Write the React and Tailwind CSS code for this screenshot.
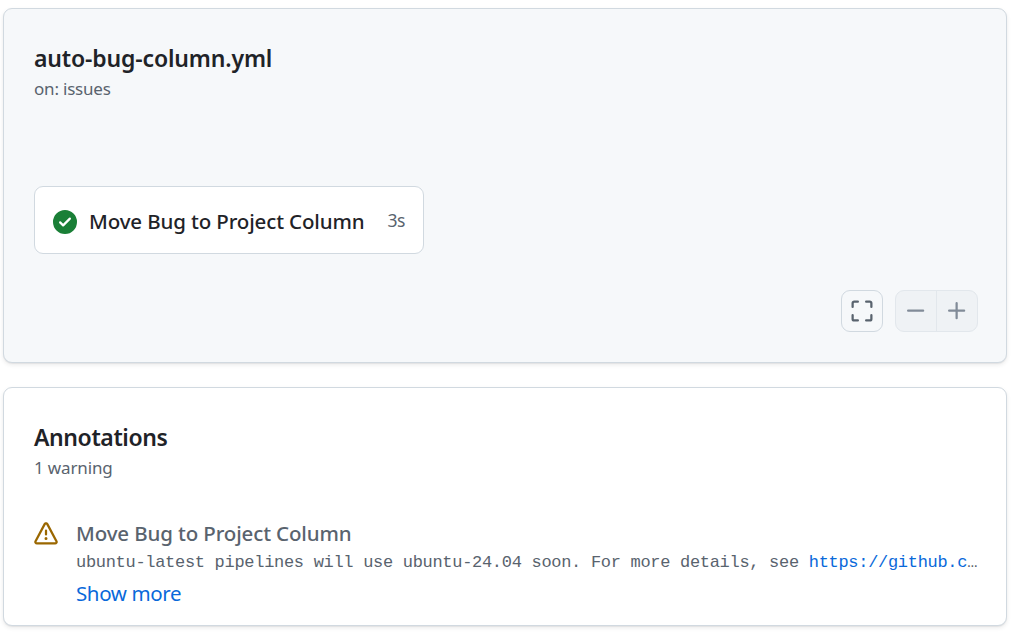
import React from "react";

function Icon({ className, size = 24, children }) {
  return (
    <svg viewBox="0 0 16 16" width={size} height={size} fill="currentColor" className={"shrink-0 " + className}>
      {children}
    </svg>
  );
}

function Card({ className, children }) {
  return (
    <section className={"rounded-[9px] border border-[#d1d9e0] shadow-[0_1px_1px_#1f232810,0_2px_4px_#1f232816] " + className}>
      {children}
    </section>
  );
}

export default function App() {
  return (
    <main className="flex h-[632px] w-[1013px] flex-col gap-6 overflow-hidden bg-white pt-2 pr-1.5 pl-[3px] font-['Noto_Sans','Open_Sans',sans-serif] text-[#1f2328]">
      <Card className="flex h-[355px] flex-col bg-[#f6f8fa] pt-[33px] pr-7 pl-[30px]">
        <h2 className="h-8 text-[23px] leading-8 font-semibold tracking-[-0.15px] whitespace-nowrap">auto-bug-column.yml</h2>
        <p className="h-7 pt-px text-[17px] leading-7 tracking-[-0.2px] whitespace-nowrap text-[#59636e]">on: issues</p>
        <div className="mt-[84px] flex h-[68px] w-[390px] items-center rounded-[9px] border border-[#d1d9e0] bg-white pt-1 pr-[18px] pl-[18px]">
          <Icon className="text-[#1a7f37]">
            <path d="M8 16A8 8 0 1 1 8 0a8 8 0 0 1 0 16Zm3.78-9.72a.751.751 0 0 0-.018-1.042.751.751 0 0 0-1.042-.018L6.75 9.19 5.28 7.72a.751.751 0 0 0-1.042.018.751.751 0 0 0-.018 1.042l2 2a.75.75 0 0 0 1.06 0Z" />
          </Icon>
          <span className="ml-3 pb-0.5 text-[20.5px] leading-7 font-medium tracking-[-0.13px] whitespace-nowrap">Move Bug to Project Column</span>
          <span className="ml-auto pb-1 text-[17.5px] leading-7 tracking-[-0.4px] text-[#59636e]">3s</span>
        </div>
        <div className="mt-9 flex justify-end gap-3">
          <button className="flex size-[42px] items-center justify-center rounded-[9px] border border-[#d1d9e0] bg-[#f6f8fa] text-[#59636e]">
            <Icon className="">
              <path d="M1.75 10a.75.75 0 0 1 .75.75v2.5c0 .138.112.25.25.25h2.5a.75.75 0 0 1 0 1.5h-2.5A1.75 1.75 0 0 1 1 13.25v-2.5a.75.75 0 0 1 .75-.75Zm12.5 0a.75.75 0 0 1 .75.75v2.5A1.75 1.75 0 0 1 13.25 15h-2.5a.75.75 0 0 1 0-1.5h2.5a.25.25 0 0 0 .25-.25v-2.5a.75.75 0 0 1 .75-.75ZM2.75 2.5a.25.25 0 0 0-.25.25v2.5a.75.75 0 0 1-1.5 0v-2.5C1 1.784 1.784 1 2.75 1h2.5a.75.75 0 0 1 0 1.5ZM10 1.75a.75.75 0 0 1 .75-.75h2.5c.966 0 1.75.784 1.75 1.75v2.5a.75.75 0 0 1-1.5 0v-2.5a.25.25 0 0 0-.25-.25h-2.5a.75.75 0 0 1-.75-.75Z" />
            </Icon>
          </button>
          <div className="flex h-[42px] w-[83px] rounded-[9px] border border-[#e2e7ec] bg-[#eff2f5] text-[#818b98]">
            <button className="flex w-[41px] items-center justify-center border-r border-[#e2e7ec]">
              <Icon className=""><path d="M2 7.75A.75.75 0 0 1 2.75 7h10a.75.75 0 0 1 0 1.5h-10A.75.75 0 0 1 2 7.75Z" /></Icon>
            </button>
            <button className="flex w-10 items-center justify-center">
              <Icon className=""><path d="M7.75 2a.75.75 0 0 1 .75.75V7h4.25a.75.75 0 0 1 0 1.5H8.5v4.25a.75.75 0 0 1-1.5 0V8.5H2.75a.75.75 0 0 1 0-1.5H7V2.75A.75.75 0 0 1 7.75 2Z" /></Icon>
            </button>
          </div>
        </div>
      </Card>

      <Card className="h-[239px] bg-white pt-[33px] pr-7 pl-[30px]">
        <h2 className="h-8 text-[23px] leading-8 font-semibold tracking-[-0.4px] whitespace-nowrap">Annotations</h2>
        <p className="h-7 pt-px text-[17px] leading-7 tracking-[-0.15px] whitespace-nowrap text-[#59636e]">1 warning</p>
        <div className="mt-[37px] flex gap-[18px]">
          <Icon className="mt-1 text-[#9a6700]">
            <path d="M6.457 1.047c.659-1.234 2.427-1.234 3.086 0l6.082 11.378A1.75 1.75 0 0 1 14.082 15H1.918a1.75 1.75 0 0 1-1.543-2.575Zm1.763.707a.25.25 0 0 0-.44 0L1.698 13.132a.25.25 0 0 0 .22.368h12.164a.25.25 0 0 0 .22-.368Zm.53 3.996v2.5a.75.75 0 0 1-1.5 0v-2.5a.75.75 0 0 1 1.5 0ZM9 11a1 1 0 1 1-2 0 1 1 0 0 1 2 0Z" />
          </Icon>
          <div className="min-w-0 flex-1 text-[#59636e]">
            <h3 className="h-[30px] text-[20.5px] leading-[30px] font-medium tracking-[-0.13px] whitespace-nowrap">Move Bug to Project Column</h3>
            <p className="h-7 pt-px font-['Liberation_Mono',monospace] text-[17px] leading-7 tracking-[-0.3px] whitespace-nowrap">
              ubuntu-latest pipelines will use ubuntu-24.04 soon. For more details, see <a className="text-[#0969da]">https://github.c</a>…
            </p>
            <a className="block h-[34px] text-[20.5px] leading-[34px] tracking-[-0.38px] text-[#0969da]">Show more</a>
          </div>
        </div>
      </Card>
    </main>
  );
}
